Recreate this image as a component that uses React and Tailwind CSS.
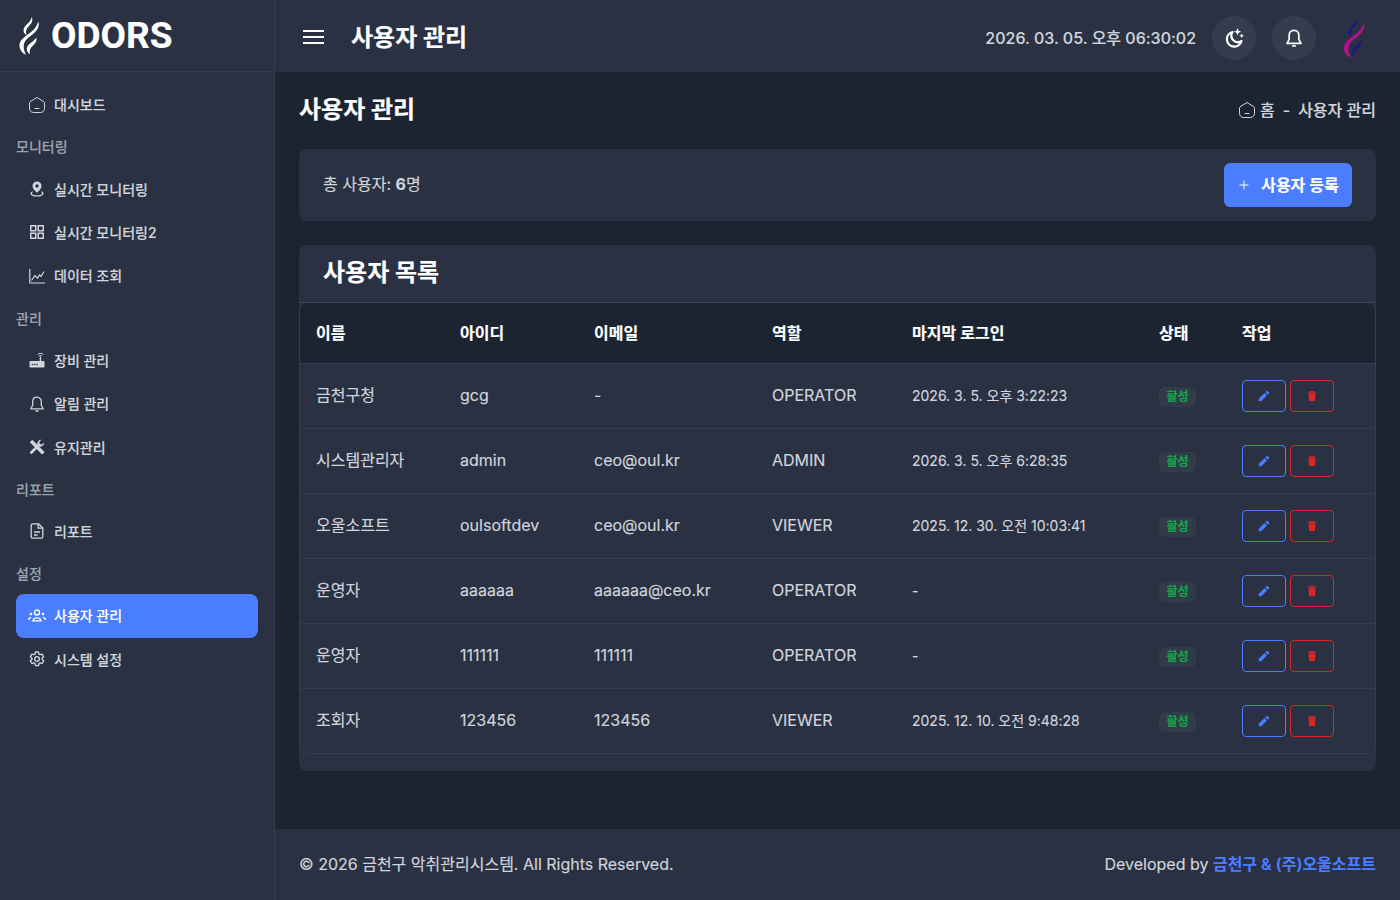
import React from "react";
import { Plus } from "lucide-react";
import { RiPencilFill } from "react-icons/ri";

const FONT = "font-['Inter','Noto_Sans_CJK_KR',sans-serif]";

function Home({ className }) {
  return (
    <svg viewBox="0 0 16 16" fill="none" stroke="currentColor" strokeWidth="1" className={className}>
      <path d="M8 .5 15 4.800c.3.200.5.500.5.900v5.800c0 2.200-1.800 4-4 4h-7c-2.200 0-4-1.800-4-4V5.700c0-.4.200-.7.500-.9Z" strokeLinejoin="round" />
      <path d="M6 11.500h4" strokeLinecap="round" />
    </svg>
  );
}
function Pin({ className }) {
  return (
    <svg viewBox="0 0 16 16" className={className} fill="currentColor">
      <path fillRule="evenodd" d="M8 .4a4.500 4.500 0 0 1 4.500 4.500c0 2.600-2.500 5-4.500 6.800-2-1.800-4.500-4.200-4.500-6.800A4.500 4.500 0 0 1 8 .4Zm0 2.900a1.700 1.700 0 1 0 0 3.400 1.700 1.700 0 0 0 0-3.400Z" />
      <path d="M3.300 10.200c-1.100.5-1.800 1.300-1.800 2.200 0 1.800 2.900 3.200 6.500 3.200s6.500-1.400 6.500-3.200c0-.9-.7-1.700-1.800-2.200l-.7 1.100c.8.300 1.200.7 1.200 1.100 0 .8-2.100 1.900-5.200 1.900s-5.200-1.100-5.200-1.900c0-.4.400-.8 1.200-1.100Z" />
    </svg>
  );
}
function Grid({ className }) {
  return (
    <svg viewBox="0 0 16 16" fill="none" stroke="currentColor" strokeWidth="1.500" className={className}>
      <rect x="1.750" y="1.750" width="5" height="5" />
      <rect x="9.250" y="1.750" width="5" height="5" />
      <rect x="1.750" y="9.250" width="5" height="5" />
      <rect x="9.250" y="9.250" width="5" height="5" />
    </svg>
  );
}
function Chart({ className }) {
  return (
    <svg viewBox="0 0 16 16" fill="none" stroke="currentColor" strokeWidth="1.200" className={className}>
      <path d="M.8 1V15H16" />
      <path d="M2.500 12.500 6 7.500l2.500 2.800L10.500 7l1.500 1.300 3-4.800" />
    </svg>
  );
}
function Router({ className }) {
  return (
    <svg viewBox="0 0 16 16" className={className} fill="currentColor">
      <path d="M1.500 9h13c.6 0 1 .4 1 1v4.500c0 .6-.4 1-1 1h-13c-.6 0-1-.4-1-1V10c0-.6.400-1 1-1Z" />
      <rect x="10.700" y="4.500" width="1.400" height="5" />
      <path d="M8.500 2.500C10 1 12.800 1 14.300 2.500M9.800 4c.9-.6 2-.6 2.900 0" fill="none" stroke="currentColor" strokeWidth="1" />
      <circle cx="3.500" cy="12.500" r=".8" fill="#2a3142" />
      <circle cx="5.800" cy="12.500" r=".8" fill="#2a3142" />
      <circle cx="8" cy="12.500" r=".8" fill="#2a3142" />
    </svg>
  );
}
function BellIcon({ className, w = 1.300 }) {
  return (
    <svg viewBox="0 0 16 16" fill="none" stroke="currentColor" strokeWidth={w} className={className}>
      <path d="M8 1.200c-2.800 0-4.300 2.200-4.300 4.500v3.600L1.800 12.800h12.400l-1.900-3.500V5.700c0-2.300-1.500-4.500-4.300-4.500Z" strokeLinejoin="round" />
      <path d="M7 15h2" strokeLinecap="round" />
    </svg>
  );
}
function Doc({ className }) {
  return (
    <svg viewBox="0 0 16 16" fill="none" stroke="currentColor" strokeWidth="1.300" className={className}>
      <path d="M3.500 .8h6L13.800 5v8.700c0 .8-.7 1.500-1.500 1.500H3.700c-.8 0-1.500-.7-1.500-1.500V2.300C2.200 1.500 2.700.8 3.500.8Z" strokeLinejoin="round" />
      <path d="M9.200 1v4.200h4.400M5 9h6M5 12h3.500" />
    </svg>
  );
}
function Tools({ className }) {
  return (
    <svg viewBox="0 0 16 16" fill="currentColor" className={className}>
      <path d="M.8 3.300 3.300.8 14.800 12.300c.5.500.5 1.300 0 1.800l-.7.700c-.5.500-1.300.5-1.800 0Z" />
      <path d="M15.200 3.600a4 4 0 0 1-5.100 3.900L3.400 14.600c-.6.600-1.500.6-2 0-.6-.6-.6-1.400 0-2L8.400 5.800A4 4 0 0 1 12.500.7L10.300 3l.5 2.100 2.100.5 2.200-2.200Z" />
    </svg>
  );
}
function Gear({ className }) {
  return (
    <svg viewBox="0 0 24 24" fill="none" stroke="currentColor" strokeWidth="2" strokeLinecap="round" strokeLinejoin="round" className={className}>
      <path d="M9.700 1.500h4.600l.6 3.100 1.800 1 3-1 2.300 4-2.400 2.100v2l2.400 2.100-2.300 4-3-1-1.800 1-.6 3.100H9.700l-.6-3.100-1.800-1-3 1-2.300-4 2.400-2.100v-2L2 8.600l2.300-4 3 1 1.800-1Z" />
      <circle cx="12" cy="12" r="3.500" />
    </svg>
  );
}
function Users({ className }) {
  return (
    <svg viewBox="0 0 18 14" fill="currentColor" className={className}>
      <circle cx="9" cy="3.500" r="2.500" fill="none" stroke="currentColor" strokeWidth="1.400" />
      <path fillRule="evenodd" d="M4.200 12.500c0-2.700 2.100-4.200 4.800-4.200s4.800 1.500 4.800 4.200Zm1.700-1.200h6.200c-.4-1.100-1.600-1.700-3.100-1.700s-2.700.6-3.100 1.700Z" />
      <circle cx="3" cy="5" r="1.300" />
      <circle cx="15" cy="5" r="1.300" />
      <path d="M0 11c0-1.800 1.100-3 2.900-3l.6 1c-1.200.1-2 .9-2.100 2ZM18 11c0-1.800-1.100-3-2.900-3l-.6 1c1.200.1 2 .9 2.100 2Z" />
    </svg>
  );
}
function Trash({ className }) {
  return (
    <svg viewBox="0 0 8 10" fill="currentColor" className={className}>
      <path d="M.5 2.300h7L7 10H1Z" />
      <path d="M0 .8h8v1H0ZM2.300 0h3.400v.8H2.300Z" />
    </svg>
  );
}
function MoonStars({ className }) {
  return (
    <svg viewBox="0 0 20 20" fill="none" stroke="currentColor" strokeWidth="2.200" className={className}>
      <path d="M8.500 4A7.400 7.400 0 1 0 17.500 13a6.500 6.500 0 0 1-9-9Z" strokeLinejoin="round" />
      <path d="M13.500 0l1 2.700 2.700 1-2.700 1-1 2.700-1-2.700-2.700-1 2.700-1Z" fill="currentColor" stroke="none" />
      <path d="M17.700 5.500l.7 1.600 1.600.7-1.600.7-.7 1.600-.7-1.600-1.600-.7 1.600-.7Z" fill="currentColor" stroke="none" />
    </svg>
  );
}
function Flame({ className, a, b }) {
  return (
    <svg viewBox="0 0 21 38" className={className}>
      <path d="M12.800 0c1.500 3.800-.3 6.300-2.600 8.800C8.500 10.600 7 12.500 7 15c0 1.300.3 2.500 1 3.600-2.500-1.700-4-3.900-3.300-6.700.6-2.700 2.800-4.300 4.600-6C10.900 4.300 12.200 2.500 12.800 0Z" fill={a} />
      <path d="M19.300 4.500c1.700 5-1.200 9-5 12.300-3.700 3.200-8 5.700-9.300 10-.8 3.200-.2 6.800 2 11C3 36.200.2 32.300.5 27.800c.3-4.800 5-7.700 9.300-11 4-3 7.800-6.400 9.500-12.300Z" fill={b} />
      <path d="M17.300 20.500c.9 3.800-1.200 6.200-3.700 8.500-1.900 1.800-3.400 4-2.700 8.500-2.400-1.700-3.500-4-3-6.500.6-2.800 3-4.300 5-6 1.800-1.400 3.400-2.800 4.400-4.500Z" fill={a} />
    </svg>
  );
}

const ic = "w-4 h-4 text-[#d1d5db]";
const nav = [
  { t: "대시보드", i: <Home className={ic} /> },
  { h: "모니터링" },
  { t: "실시간 모니터링", i: <Pin className={ic} /> },
  { t: "실시간 모니터링2", i: <Grid className={ic} /> },
  { t: "데이터 조회", i: <Chart className={ic} /> },
  { h: "관리" },
  { t: "장비 관리", i: <Router className={ic} /> },
  { t: "알림 관리", i: <BellIcon className={ic} /> },
  { t: "유지관리", i: <Tools className={ic} /> },
  { h: "리포트" },
  { t: "리포트", i: <Doc className={ic} /> },
  { h: "설정" },
  { t: "사용자 관리", i: <Users className="w-[18px] h-[14px] text-white" />, active: true },
  { t: "시스템 설정", i: <Gear className={ic} /> },
];

const rows = [
  ["금천구청", "gcg", "-", "OPERATOR", "2026. 3. 5. 오후 3:22:23"],
  ["시스템관리자", "admin", "ceo@oul.kr", "ADMIN", "2026. 3. 5. 오후 6:28:35"],
  ["오울소프트", "oulsoftdev", "ceo@oul.kr", "VIEWER", "2025. 12. 30. 오전 10:03:41"],
  ["운영자", "aaaaaa", "aaaaaa@ceo.kr", "OPERATOR", "-"],
  ["운영자", "111111", "111111", "OPERATOR", "-"],
  ["조회자", "123456", "123456", "VIEWER", "2025. 12. 10. 오전 9:48:28"],
];
const heads = ["이름", "아이디", "이메일", "역할", "마지막 로그인", "상태", "작업"];

export default function App() {
  return (
    <div className={`${FONT} flex w-[1400px] h-[900px] overflow-hidden bg-[#1c2431] text-[#d1d5db] [-webkit-text-stroke:0.15px]`}>
      <aside className="w-[275px] shrink-0 bg-[#2a3142] border-r border-[#343c4e] flex flex-col">
        <div className="h-[72px] shrink-0 border-b border-[#343c4e] flex items-center pl-[19px] gap-[11px]">
          <Flame className="w-[21px] h-[38px] mt-[1px]" a="#ffffff" b="#ffffff" />
          <span className="text-[37px] font-bold text-white leading-none [font-family:'Roboto',sans-serif]">ODORS</span>
        </div>
        <nav className="px-4 pt-[11px] flex flex-col">
          {nav.map((n, i) =>
            n.h ? (
              <div key={i} className="h-[41px] flex items-center text-[14px] font-medium text-[#9ca3af]">{n.h}</div>
            ) : (
              <div key={i} className={`h-[43.4px] flex items-center rounded-lg pl-3 gap-2 text-[14px] font-medium ${n.active ? "bg-[#4a7dff] text-white" : "text-[#d1d5db]"}`}>
                <span className="w-[18px] flex justify-center">{n.i}</span>
                <span>{n.t}</span>
              </div>
            )
          )}
        </nav>
      </aside>
      <div className="flex-1 flex flex-col min-w-0">
        <header className="h-[72px] shrink-0 bg-[#2a3142] flex items-center pl-[28px] pr-[32px]">
          <svg viewBox="0 0 21 14" className="w-[21px] h-[14px] mt-[2px] text-white" stroke="currentColor" strokeWidth="2">
            <path d="M0 1h21M0 7h21M0 13h21" />
          </svg>
          <h1 className="ml-[27px] pt-[3px] text-[24px] font-bold text-white">사용자 관리</h1>
          <div className="ml-auto pt-[3px] text-[16px] font-medium text-[#d1d5db]">2026. 03. 05. 오후 06:30:02</div>
          <div className="ml-4 mt-1 w-11 h-11 rounded-full bg-[#343c4e] flex items-center justify-center">
            <MoonStars className="w-5 h-5 text-white" />
          </div>
          <div className="ml-4 mt-1 w-11 h-11 rounded-full bg-[#343c4e] flex items-center justify-center">
            <BellIcon className="w-[18px] h-[18px] text-white" w={1.500} />
          </div>
          <div className="ml-6 mt-1 w-[28px] h-[44px] flex items-center justify-center">
            <Flame className="w-[23px] h-[40px]" a="#1e1b7a" b="#b3128f" />
          </div>
        </header>
        <main className="flex-1 min-h-0 px-6 flex flex-col">
          <div className="h-[77px] shrink-0 flex items-center justify-between pb-[2px]">
            <h2 className="text-[24px] font-bold text-white">사용자 관리</h2>
            <div className="flex items-center text-[16px] font-medium text-[#d1d5db]">
              <Home className="w-4 h-4 mr-[5px] text-[#d1d5db]" />
              <span>홈</span>
              <span className="mx-[8px]">-</span>
              <span>사용자 관리</span>
            </div>
          </div>
          <section className="h-[72px] shrink-0 bg-[#2a3142] rounded-lg flex items-center justify-between pl-6 pr-6">
            <div className="text-[16px] text-[#d1d5db] -mt-[2px]">총 사용자: <b className="font-bold">6</b>명</div>
            <button className="h-11 w-[128px] rounded-md bg-[#4a7dff] text-white text-[16px] font-semibold flex items-center justify-center gap-[10px]">
              <Plus className="w-[14px] h-[14px]" strokeWidth={1.7} />
              사용자 등록
            </button>
          </section>
          <section className="mt-6 h-[526px] shrink-0 bg-[#2a3142] rounded-lg">
            <div className="h-[58px] border-b border-[#3e4657] flex items-center pl-6 pb-[1px] text-[24px] font-bold text-white">사용자 목록</div>
            <div className="border border-t-0 border-[#343c4e] rounded-lg overflow-hidden">
              <table className="w-full table-fixed border-collapse text-left">
                <colgroup>
                  <col className="w-[160px]" />
                  <col className="w-[134px]" />
                  <col className="w-[178px]" />
                  <col className="w-[140px]" />
                  <col className="w-[247px]" />
                  <col className="w-[83px]" />
                  <col />
                </colgroup>
                <thead>
                  <tr className="h-[60px] bg-[#1c2431]">
                    {heads.map((h, i) => (
                      <th key={i} className={`text-[16px] font-semibold text-white ${i === 0 ? "pl-4" : ""}`}>{h}</th>
                    ))}
                  </tr>
                </thead>
                <tbody>
                  {rows.map((r, i) => (
                    <tr key={i} className="h-[65px] border-t border-[#343c4e] text-[16px] text-[#d1d5db]">
                      <td className="pl-4 pb-[2px]">{r[0]}</td>
                      <td className="pb-[2px]">{r[1]}</td>
                      <td className="pb-[2px]">{r[2]}</td>
                      <td className="pb-[2px]">{r[3]}</td>
                      <td className="text-[14px]">{r[4]}</td>
                      <td className="pb-[2px]">
                        <span className="inline-flex items-center justify-center w-[37px] h-5 rounded-md bg-[#313c49] text-[12px] font-semibold text-[#16a34a]">활성</span>
                      </td>
                      <td>
                        <div className="flex gap-[4px]">
                          <button className="w-11 h-8 rounded border border-[#4a7dff] flex items-center justify-center">
                            <RiPencilFill className="w-[14px] h-[14px] text-[#4a7dff]" />
                          </button>
                          <button className="w-11 h-8 rounded border border-[#dc2626] flex items-center justify-center">
                            <Trash className="w-2 h-[10px] text-[#dc2626]" />
                          </button>
                        </div>
                      </td>
                    </tr>
                  ))}
                </tbody>
              </table>
            </div>
          </section>
          <div className="flex-1" />
        </main>
        <footer className="h-[71px] shrink-0 bg-[#2a3142] px-6 pb-[2px] flex items-center justify-between text-[16px] text-[#d1d5db]">
          <div>© 2026 금천구 악취관리시스템. All Rights Reserved.</div>
          <div>Developed by <span className="font-semibold text-[#4a7dff]">금천구 &amp; (주)오울소프트</span></div>
        </footer>
      </div>
    </div>
  );
}
